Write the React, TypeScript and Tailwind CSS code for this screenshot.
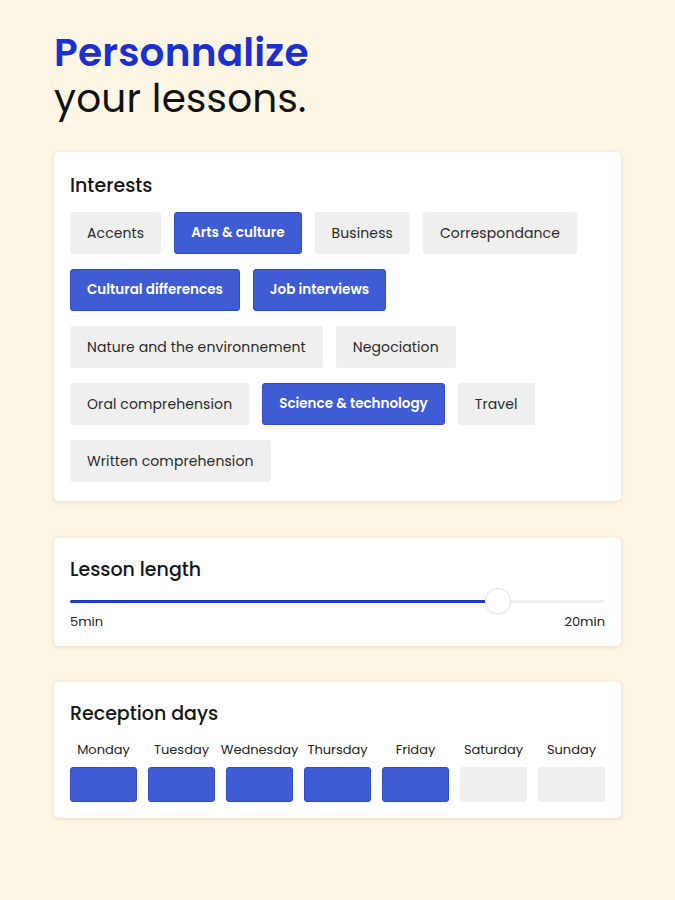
import { useState } from 'react';

const interests = [
  { label: 'Accents', on: false },
  { label: 'Arts & culture', on: true },
  { label: 'Business', on: false },
  { label: 'Correspondance', on: false },
  { label: 'Cultural differences', on: true },
  { label: 'Job interviews', on: true },
  { label: 'Nature and the environnement', on: false },
  { label: 'Negociation', on: false },
  { label: 'Oral comprehension', on: false },
  { label: 'Science & technology', on: true },
  { label: 'Travel', on: false },
  { label: 'Written comprehension', on: false },
];

const days = [
  { label: 'Monday', on: true },
  { label: 'Tuesday', on: true },
  { label: 'Wednesday', on: true },
  { label: 'Thursday', on: true },
  { label: 'Friday', on: true },
  { label: 'Saturday', on: false },
  { label: 'Sunday', on: false },
];

function Card({ children, className }: { children: React.ReactNode; className?: string }) {
  return (
    <div className={`bg-white rounded-[5px] shadow-[0_1px_5px_rgba(120,90,30,0.18)] px-4 ${className ?? ''}`}>
      {children}
    </div>
  );
}

export default function App() {
  const [selected, setSelected] = useState(interests.map((i) => i.on));
  const [picked, setPicked] = useState(days.map((d) => d.on));
  const [length] = useState(80);

  return (
    <div className="min-h-screen bg-[#fdf6e5] px-[54px] pt-[30px] pb-10 font-['Poppins','Inter',sans-serif] text-[#161616]">
      {/* 标题 */}
      <h1 className="text-[39px] leading-[46px] tracking-[0.2px]">
        <span className="block font-semibold text-[#1b30cf]">Personnalize</span>
        <span className="block font-normal text-[#111]">your lessons.</span>
      </h1>

      {/* Interests */}
      <Card className="mt-[30px] pt-[20px] pb-[19px]">
        <h2 className="text-[19px] leading-[28px] font-medium mb-[12px]">Interests</h2>
        <div className="flex flex-wrap gap-x-[13px] gap-y-[15px]">
          {interests.map((item, i) => (
            <button
              key={item.label}
              onClick={() => setSelected(selected.map((s, j) => (j === i ? !s : s)))}
              className={`h-[42px] rounded-[3px] ${
                selected[i]
                  ? 'px-[16px] bg-[#3f5cd4] text-white text-[13.5px] font-semibold border border-[#2f4bcc]'
                  : 'px-[17px] bg-[#efefef] text-[#2a2a2a] text-[14px] tracking-[0.1px]'
              }`}
            >
              {item.label}
            </button>
          ))}
        </div>
      </Card>

      {/* Lesson length */}
      <Card className="mt-[37px] pt-[18px] pb-[16px]">
        <h2 className="text-[19px] leading-[28px] font-medium">Lesson length</h2>
        <div className="relative mt-[4px] h-[26px] flex items-center">
          <div className="w-full h-[3px] bg-[#efefef] rounded-full">
            <div className="h-full bg-[#1b3ccf] rounded-full" style={{ width: `${length}%` }} />
          </div>
          <div
            className="absolute top-0 w-[26px] h-[26px] -ml-[13px] rounded-full bg-white border border-[#e6e6e6] shadow-[0_1px_2px_rgba(0,0,0,0.08)]"
            style={{ left: `${length}%` }}
          />
        </div>
        <div className="flex justify-between text-[13px] leading-[16px] text-[#222]">
          <span>5min</span>
          <span>20min</span>
        </div>
      </Card>

      {/* Reception days */}
      <Card className="mt-[36px] pt-[18px] pb-[16px]">
        <h2 className="text-[19px] leading-[28px] font-medium">Reception days</h2>
        <div className="grid grid-cols-7 gap-x-[11px] mt-[13px]">
          {days.map((d, i) => (
            <button
              key={d.label}
              onClick={() => setPicked(picked.map((p, j) => (j === i ? !p : p)))}
              className="flex flex-col items-center"
            >
              <span className="text-[13px] leading-[18px] text-[#222] whitespace-nowrap">{d.label}</span>
              <span
                className={`mt-[8px] w-full h-[35px] rounded-[3px] ${
                  picked[i] ? 'bg-[#3f5cd4] border border-[#2f4bcc]' : 'bg-[#efefef]'
                }`}
              />
            </button>
          ))}
        </div>
      </Card>
    </div>
  );
}
